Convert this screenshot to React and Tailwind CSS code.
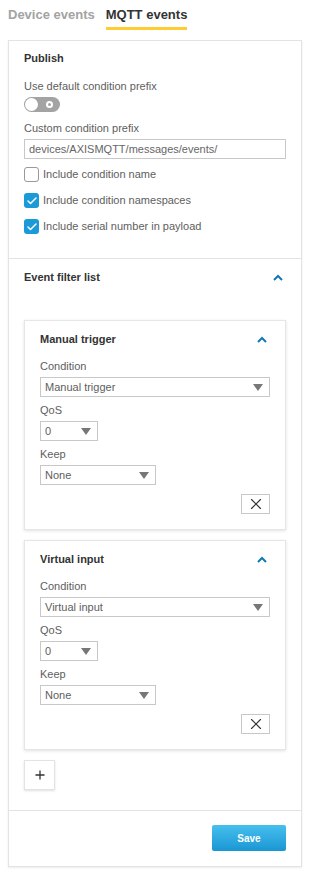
import { Check, X, Plus } from "lucide-react";

function Chevron({ className = "" }) {
  return (
    <svg width="10" height="7" viewBox="0 0 10 7" className={className}>
      <path d="M1 6 L5 2 L9 6" fill="none" stroke="#1278b4" strokeWidth="2" />
    </svg>
  );
}

function Select({ value, width }) {
  return (
    <div
      className={`mt-1 h-[20px] ${width} border border-[#c8c8c8] bg-white flex items-center justify-between pl-[4px] pr-[6px] text-[11px] text-[#5e5e5e]`}
    >
      <span>{value}</span>
      <svg width="10" height="7" viewBox="0 0 10 7">
        <path d="M0 0 L10 0 L5 7 Z" fill="#777" />
      </svg>
    </div>
  );
}

function Checkbox({ checked, label }) {
  return (
    <div className="flex items-center gap-[4px] h-[15px]">
      {checked ? (
        <div className="w-[15px] h-[15px] rounded-[3px] bg-[#1a9ad6] flex items-center justify-center">
          <Check size={12} strokeWidth={3} className="text-white" />
        </div>
      ) : (
        <div className="w-[15px] h-[15px] rounded-[3px] border border-[#999] bg-white" />
      )}
      <span className="text-[11px] text-[#5e5e5e]">{label}</span>
    </div>
  );
}

function FilterCard({ title, condition, className = "" }) {
  return (
    <div className={`border border-[#e6e6e6] bg-white shadow-[0_1px_3px_rgba(0,0,0,0.12)] pt-[11px] pb-[15px] px-[15px] ${className}`}>
      <div className="flex items-center justify-between h-[14px] pr-[3px]">
        <span className="text-[11px] font-bold text-[#333]">{title}</span>
        <Chevron />
      </div>
      <div className="mt-[13px] text-[11px] leading-[14px] text-[#5e5e5e]">Condition</div>
      <Select value={condition} width="w-full" />
      <div className="mt-[6px] text-[11px] leading-[14px] text-[#5e5e5e]">QoS</div>
      <Select value="0" width="w-[58px]" />
      <div className="mt-[6px] text-[11px] leading-[14px] text-[#5e5e5e]">Keep</div>
      <Select value="None" width="w-[116px]" />
      <div className="mt-[9px] flex justify-end">
        <div className="w-[29px] h-[20px] border border-[#c8c8c8] bg-white flex items-center justify-center">
          <X size={18} strokeWidth={1.5} className="text-[#333]" />
        </div>
      </div>
    </div>
  );
}

export default function App() {
  return (
    <div className="w-[310px] min-h-[874px] bg-white px-2 font-['Liberation_Sans',Arial,sans-serif]">
      {/* Tabs */}
      <div className="flex gap-[11px] pt-[7px]">
        <div className="text-[13px] leading-[16px] font-bold text-[#a3a3a3]">Device events</div>
        <div className="flex flex-col">
          <div className="text-[13px] leading-[16px] font-bold text-[#333]">MQTT events</div>
          <div className="mt-[4px] h-[3px] bg-[#ffcc33]" />
        </div>
      </div>

      {/* Card */}
      <div className="mt-[10px] border border-[#e3e3e3] shadow-[0_1px_2px_rgba(0,0,0,0.08)] bg-white">
        {/* Publish */}
        <div className="px-[15px] pt-[10px] pb-[24px] border-b border-[#e3e3e3]">
          <div className="text-[11px] leading-[14px] font-bold text-[#333]">Publish</div>
          <div className="mt-[14px] text-[11px] leading-[14px] text-[#5e5e5e]">Use default condition prefix</div>
          <div className="mt-[4px] w-[36px] h-[15px] rounded-full bg-[#a3a3a3] relative flex items-center">
            <div className="absolute left-[1px] w-[13px] h-[13px] rounded-full bg-white" />
            <div className="absolute right-[7px] w-[7px] h-[7px] rounded-full bg-white flex items-center justify-center">
              <div className="w-[3px] h-[3px] rounded-full bg-[#a3a3a3]" />
            </div>
          </div>
          <div className="mt-[9px] text-[11px] leading-[14px] text-[#5e5e5e]">Custom condition prefix</div>
          <div className="mt-[4px] h-[20px] border border-[#c8c8c8] flex items-center pl-[4px] text-[11px] text-[#666]">
            devices/AXISMQTT/messages/events/
          </div>
          <div className="mt-[8px] flex flex-col gap-[11px]">
            <Checkbox checked={false} label="Include condition name" />
            <Checkbox checked label="Include condition namespaces" />
            <Checkbox checked label="Include serial number in payload" />
          </div>
        </div>

        {/* Event filter list */}
        <div className="px-[15px] pt-[11px] pb-[20px] border-b border-[#e3e3e3]">
          <div className="flex items-center justify-between h-[14px] pr-[3px]">
            <span className="text-[11px] font-bold text-[#333]">Event filter list</span>
            <Chevron />
          </div>
          <FilterCard title="Manual trigger" condition="Manual trigger" className="mt-[36px]" />
          <FilterCard title="Virtual input" condition="Virtual input" className="mt-[10px]" />
          <div className="mt-[10px] w-[31px] h-[30px] border border-[#e3e3e3] shadow-[0_1px_2px_rgba(0,0,0,0.12)] bg-white flex items-center justify-center">
            <Plus size={14} strokeWidth={2.2} className="text-[#333]" />
          </div>
        </div>

        {/* Footer */}
        <div className="px-[15px] pt-[14px] pb-[15px] flex justify-end">
          <div className="w-[74px] h-[26px] rounded-[2px] bg-gradient-to-b from-[#45c0ee] to-[#1896d3] flex items-center justify-center text-[10px] font-bold text-white">
            Save
          </div>
        </div>
      </div>
    </div>
  );
}
